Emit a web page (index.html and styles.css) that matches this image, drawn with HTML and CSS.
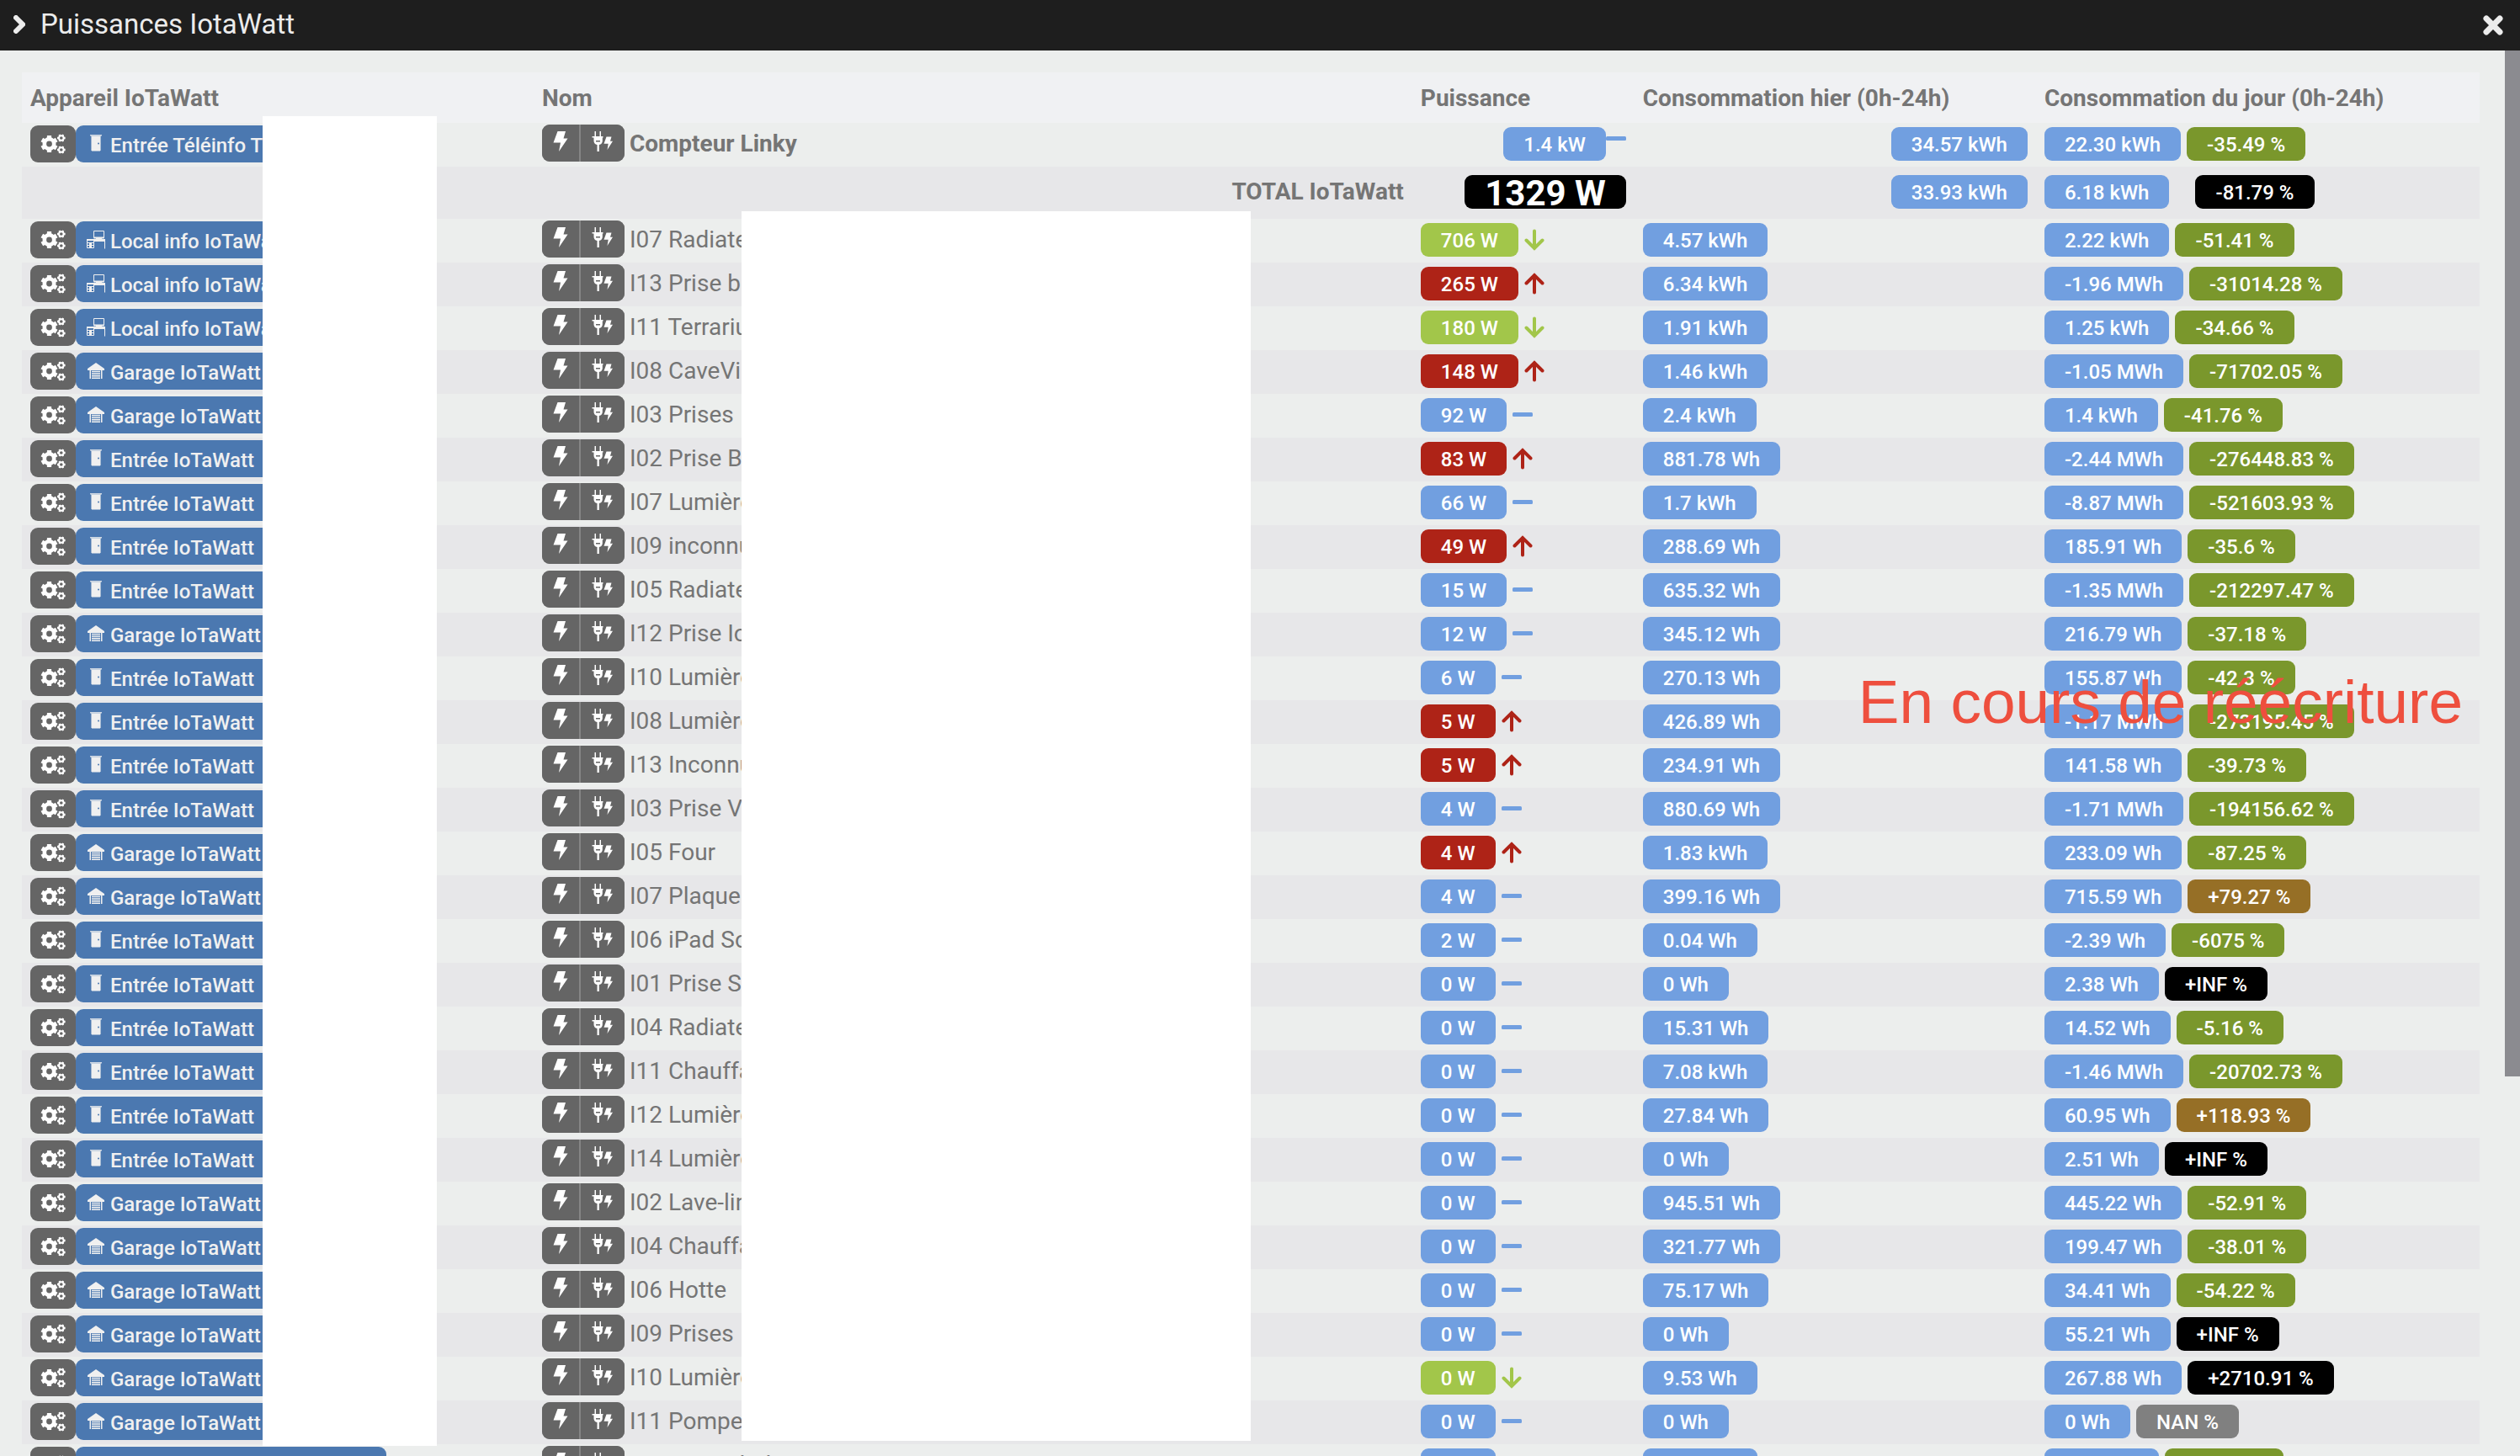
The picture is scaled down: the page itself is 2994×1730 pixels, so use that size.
FILE: index.html
```html
<!DOCTYPE html>
<html lang="fr">
<head>
<meta charset="utf-8">
<title>Puissances IotaWatt</title>
<link rel="stylesheet" href="styles.css">
</head>
<body>
<svg class="sprite" aria-hidden="true">
  <symbol id="cogs" viewBox="0 0 30 24">
    <g fill="none" stroke="currentColor">
      <circle cx="10.5" cy="12" r="5.7" stroke-width="4.6"/>
      <path stroke-width="5.2" stroke-linecap="butt" d="M10.5 2v4.500M10.500 17.500V22M1.840 7l3.900 2.250M15.260 14.750l3.900 2.250M1.840 17l3.900-2.250M15.260 9.250l3.900-2.250"/>
      <circle cx="24.800" cy="5" r="2.800" stroke-width="2"/>
      <path stroke-width="2.400" d="M22.500 1l.9 1.500M27.100 1l-.9 1.500M22.500 9l.9-1.500M27.100 9l-.9-1.500M20 5h1.800M29.600 5h-1.800"/>
      <circle cx="24.800" cy="19" r="2.800" stroke-width="2"/>
      <path stroke-width="2.400" d="M22.500 15l.9 1.500M27.100 15l-.9 1.500M22.500 23l.9-1.500M27.100 23l-.9-1.500M20 19h1.800M29.600 19h-1.800"/>
    </g>
  </symbol>
  <symbol id="door" viewBox="0 0 24 24">
    <path fill="currentColor" opacity=".8" d="M5 1h14v1.500H5z"/>
    <path fill="currentColor" opacity=".55" d="M6 2h12v18H6z"/>
    <path fill="currentColor" d="M7 3h10v17.500H7z"/>
    <circle cx="15" cy="11.500" r="1" fill="#4b78b0"/>
  </symbol>
  <symbol id="desk" viewBox="0 0 24 24">
    <g fill="none" stroke="currentColor" stroke-width="1">
      <path d="M9.500 1.500h12v8h-12zM1.500 12.500h8v9h-8zM1.500 15.500h8M1.500 18.500h8M10 13.500h12M22.500 12v10.500"/>
      <path stroke-width="2" d="M9.500 9.500h12M12 11.500h7M1 12h22M4 17h3M4 20h3"/>
    </g>
  </symbol>
  <symbol id="garage" viewBox="0 0 24 24">
    <path fill="currentColor" d="M12 2L2 9v2h2.500v10H6V11h12v10h1.500V11H22V9z"/>
    <path fill="none" stroke="currentColor" stroke-width="1.600" d="M7 12.500h10M7 15h10M7 17.600h10M7 20.200h10"/>
  </symbol>
  <symbol id="bolt" viewBox="0 0 18 24">
    <path fill="currentColor" d="M5.500 0h9.500l-2.500 8.500H17.500L7 24l2-10.500H.5z"/>
  </symbol>
  <symbol id="plug" viewBox="0 0 26 24">
    <path fill="currentColor" fill-rule="evenodd" d="M3.500 0H5v6h4.500V0H11v6h2.500v1.500H12.800v4c0 2.300-1.500 4-4 4.500v8H6.500v-8c-2.500-.5-4-2.200-4-4.500v-4H.5V6h3zM5 11v1.500h5V11z"/>
    <path fill="currentColor" d="M17.500 6.500h6L22 11.800h3L18.500 22l1.200-7.200H14.500z"/>
  </symbol>
  <symbol id="down" viewBox="0 0 24 26">
    <path fill="none" stroke="currentColor" stroke-width="4" stroke-linecap="round" d="M12 2.500V23M2.500 13.500l9.500 9.500 9.500-9.500"/>
  </symbol>
  <symbol id="up" viewBox="0 0 24 26">
    <path fill="none" stroke="currentColor" stroke-width="4" stroke-linecap="round" d="M12 23.500V3M2.500 12.500L12 3l9.500 9.500"/>
  </symbol>
  <symbol id="flat" viewBox="0 0 24 26">
    <rect y="10" width="24" height="5" rx="1.500" fill="currentColor"/>
  </symbol>
</svg>

<header class="titlebar">
  <h1 class="title">
    <svg class="chevron" viewBox="0 0 14 22" aria-hidden="true"><path d="M3 3l8 8-8 8"/></svg>
    Puissances IotaWatt
  </h1>
  <button class="close" type="button" aria-label="Fermer">
    <svg class="cross" viewBox="0 0 24 24" aria-hidden="true"><path d="M4 4l16 16M20 4L4 20"/></svg>
  </button>
</header>

<main class="viewport">
  <div class="content">
    <table class="power">
      <colgroup><col class="c-device"><col class="c-name"><col class="c-power"><col class="c-yesterday"><col class="c-today"></colgroup>
      <thead>
        <tr><th>Appareil IoTaWatt</th><th>Nom</th><th>Puissance</th><th>Consommation hier (0h-24h)</th><th>Consommation du jour (0h-24h)</th></tr>
      </thead>
      <tbody id="rows"></tbody>
    </table>
    <div class="mask mask-device"></div>
    <div class="mask mask-name"></div>
    <p class="notice">En cours de réécriture</p>
  </div>
  <div class="scrollbar"><div class="thumb"></div></div>
</main>
<script src="rows.js"></script>
</body>
</html>
```
FILE: styles.css
```css
* {
  box-sizing: border-box;
}

body {
  margin: 0;
  height: 100vh;
  display: flex;
  flex-direction: column;
  overflow: hidden;
  background: #eceeed;
  color: #757575;
  font-family: Roboto, "Liberation Sans", sans-serif;
  font-size: 28px;
}

button {
  border: 0;
  padding: 0;
  font: inherit;
  color: inherit;
  background: none;
}

.sprite {
  display: none;
}

/* Title bar */
.titlebar {
  flex: none;
  height: 60px;
  display: flex;
  align-items: center;
  justify-content: space-between;
  padding: 0 20px 0 16px;
  background: #1e1e1e;
  color: #ececec;
}

.title {
  margin: 0;
  display: flex;
  align-items: center;
  gap: 18px;
  padding-bottom: 3px;
  font-size: 33px;
  font-weight: 400;
  line-height: 57px;
}

.chevron,
.cross {
  display: block;
  fill: none;
  stroke: currentColor;
  stroke-width: 6;
  stroke-linecap: round;
}

.chevron {
  width: 14px;
  height: 22px;
}

.cross {
  width: 24px;
  height: 24px;
  stroke-width: 7;
}

/* Scrolling area */
.viewport {
  flex: 1;
  min-height: 0;
  display: flex;
}

.content {
  position: relative;
  flex: 1;
  overflow: hidden;
  padding: 26px 30px 0 26px;
}

.scrollbar {
  width: 18px;
}

.thumb {
  height: 73%;
  background: #8b8b90;
}

/* Table */
.power {
  width: 100%;
  table-layout: fixed;
  border-collapse: collapse;
}

.c-device { width: 20.82%; }
.c-name { width: 35.75%; }
.c-power { width: 9.04%; }
.c-yesterday { width: 16.34%; }
.c-today { width: 18.05%; }

.power th {
  height: 60px;
  padding: 0 10px;
  background: #f0f1f3;
  text-align: left;
  font-weight: 700;
  white-space: nowrap;
}

.power td {
  height: 52px;
  padding: 5px 10px 0;
  vertical-align: top;
  white-space: nowrap;
}

.power tbody tr:nth-child(even) {
  background: #e7e7e9;
}

.power td.device {
  padding-top: 3px;
}

.power td.name {
  padding-top: 2px;
}

.power .total td {
  height: 62px;
  padding-top: 10px;
}

.total .label {
  text-align: right;
  font-weight: 700;
  line-height: 40px;
}

.line {
  display: flex;
  align-items: center;
}

.right {
  justify-content: flex-end;
}

.cog {
  width: 54px;
  height: 44px;
  display: flex;
  align-items: center;
  justify-content: center;
  border-radius: 9px;
  background: #656565;
  color: #fff;
}

.cog svg {
  width: 30px;
  height: 24px;
}

.source {
  width: 369px;
  height: 44px;
  display: flex;
  align-items: center;
  gap: 5px;
  padding-left: 12px;
  border-radius: 9px;
  background: #4b78b0;
  color: #f0f0f0;
  font-size: 24px;
  font-weight: 500;
}

.source svg {
  width: 24px;
  height: 24px;
}

.source span,
.badge {
  padding-top: 3px;
}

.pair {
  display: flex;
  gap: 2px;
  margin-right: 6px;
  overflow: hidden;
  border-radius: 9px;
  background: #858585;
  color: #fff;
}

.pair button {
  width: 44px;
  height: 44px;
  display: flex;
  justify-content: center;
  padding-top: 8px;
  background: #656565;
}

.pair .cmd {
  width: 52px;
}

.pair svg {
  width: 26px;
  height: 24px;
}

.main .title-name {
  font-weight: 700;
}

.badge {
  height: 40px;
  padding-left: 24px;
  padding-right: 24px;
  border-radius: 9px;
  color: #fff;
  font-size: 24px;
  font-weight: 500;
  line-height: 37px;
}

.badge + .badge {
  margin-left: 7px;
}

.total .badge + .badge {
  margin-left: 31px;
}

.badge.big {
  font-size: 42px;
  font-weight: 700;
}

.blue { background: #719fe0; }
.lime { background: #a2c64a; }
.red { background: #ae2317; }
.olive { background: #7a972c; }
.brown { background: #966f26; }
.black { background: #000; }
.grey { background: #808080; }

.trend {
  width: 24px;
  height: 26px;
  margin-left: 7px;
}

.main .trend {
  margin: 0 0 12px;
}

.trend-flat { color: #719fe0; }
.trend-down { color: #a2c64a; }
.trend-up { color: #ae2317; }

/* Blanked-out zones and notice laid over the table */
.mask {
  position: absolute;
  background: #fff;
}

.mask-device {
  top: 78px;
  left: 312px;
  width: 207px;
  height: 1580px;
}

.mask-name {
  top: 191px;
  left: 881px;
  width: 605px;
  height: 1461px;
}

.notice {
  position: absolute;
  top: 734px;
  right: 50px;
  margin: 0;
  color: #ee4f3e;
  font-family: "Liberation Sans", Arial, sans-serif;
  font-size: 73px;
  line-height: 80px;
  white-space: nowrap;
}
```
FILE: rows.js
```js
// device icon, device, name, power, trend, yesterday, today, variation, variation colour
const data = [
  ["desk", "Local info IoTaWatt", "I07 Radiateur", "706 W", "down", "4.57 kWh", "2.22 kWh", "-51.41 %", "olive"],
  ["desk", "Local info IoTaWatt", "I13 Prise bureau", "265 W", "up", "6.34 kWh", "-1.96 MWh", "-31014.28 %", "olive"],
  ["desk", "Local info IoTaWatt", "I11 Terrarium", "180 W", "down", "1.91 kWh", "1.25 kWh", "-34.66 %", "olive"],
  ["garage", "Garage IoTaWatt", "I08 CaveVin", "148 W", "up", "1.46 kWh", "-1.05 MWh", "-71702.05 %", "olive"],
  ["garage", "Garage IoTaWatt", "I03 Prises", "92 W", "flat", "2.4 kWh", "1.4 kWh", "-41.76 %", "olive"],
  ["door", "Entrée IoTaWatt", "I02 Prise Bureau", "83 W", "up", "881.78 Wh", "-2.44 MWh", "-276448.83 %", "olive"],
  ["door", "Entrée IoTaWatt", "I07 Lumières", "66 W", "flat", "1.7 kWh", "-8.87 MWh", "-521603.93 %", "olive"],
  ["door", "Entrée IoTaWatt", "I09 inconnu", "49 W", "up", "288.69 Wh", "185.91 Wh", "-35.6 %", "olive"],
  ["door", "Entrée IoTaWatt", "I05 Radiateur", "15 W", "flat", "635.32 Wh", "-1.35 MWh", "-212297.47 %", "olive"],
  ["garage", "Garage IoTaWatt", "I12 Prise IoTaWatt", "12 W", "flat", "345.12 Wh", "216.79 Wh", "-37.18 %", "olive"],
  ["door", "Entrée IoTaWatt", "I10 Lumières", "6 W", "flat", "270.13 Wh", "155.87 Wh", "-42.3 %", "olive"],
  ["door", "Entrée IoTaWatt", "I08 Lumières", "5 W", "up", "426.89 Wh", "-1.17 MWh", "-273195.45 %", "olive"],
  ["door", "Entrée IoTaWatt", "I13 Inconnu", "5 W", "up", "234.91 Wh", "141.58 Wh", "-39.73 %", "olive"],
  ["door", "Entrée IoTaWatt", "I03 Prise Véranda", "4 W", "flat", "880.69 Wh", "-1.71 MWh", "-194156.62 %", "olive"],
  ["garage", "Garage IoTaWatt", "I05 Four", "4 W", "up", "1.83 kWh", "233.09 Wh", "-87.25 %", "olive"],
  ["garage", "Garage IoTaWatt", "I07 Plaque", "4 W", "flat", "399.16 Wh", "715.59 Wh", "+79.27 %", "brown"],
  ["door", "Entrée IoTaWatt", "I06 iPad Sol", "2 W", "flat", "0.04 Wh", "-2.39 Wh", "-6075 %", "olive"],
  ["door", "Entrée IoTaWatt", "I01 Prise Salon", "0 W", "flat", "0 Wh", "2.38 Wh", "+INF %", "black"],
  ["door", "Entrée IoTaWatt", "I04 Radiateur", "0 W", "flat", "15.31 Wh", "14.52 Wh", "-5.16 %", "olive"],
  ["door", "Entrée IoTaWatt", "I11 Chauffage", "0 W", "flat", "7.08 kWh", "-1.46 MWh", "-20702.73 %", "olive"],
  ["door", "Entrée IoTaWatt", "I12 Lumières", "0 W", "flat", "27.84 Wh", "60.95 Wh", "+118.93 %", "brown"],
  ["door", "Entrée IoTaWatt", "I14 Lumières", "0 W", "flat", "0 Wh", "2.51 Wh", "+INF %", "black"],
  ["garage", "Garage IoTaWatt", "I02 Lave-linge", "0 W", "flat", "945.51 Wh", "445.22 Wh", "-52.91 %", "olive"],
  ["garage", "Garage IoTaWatt", "I04 Chauffage", "0 W", "flat", "321.77 Wh", "199.47 Wh", "-38.01 %", "olive"],
  ["garage", "Garage IoTaWatt", "I06 Hotte", "0 W", "flat", "75.17 Wh", "34.41 Wh", "-54.22 %", "olive"],
  ["garage", "Garage IoTaWatt", "I09 Prises", "0 W", "flat", "0 Wh", "55.21 Wh", "+INF %", "black"],
  ["garage", "Garage IoTaWatt", "I10 Lumières", "0 W", "down", "9.53 Wh", "267.88 Wh", "+2710.91 %", "black"],
  ["garage", "Garage IoTaWatt", "I11 Pompe", "0 W", "flat", "0 Wh", "0 Wh", "NAN %", "grey"],
  ["garage", "Garage IoTaWatt", "I01 Prise chaîne", "0 W", "flat", "0.04 Wh", "0.02 Wh", "-57.53 %", "olive"]
];

const icon = (id, cls = "") => `<svg class="${cls}" aria-hidden="true"><use href="#${id}"/></svg>`;
const badge = (text, color) => `<span class="badge ${color}">${text}</span>`;
const powerColor = { down: "lime", up: "red", flat: "blue" };

const deviceCell = (ic, label) => `<td class="device"><div class="line">
  <button class="cog" type="button" aria-label="Configurer">${icon("cogs")}</button>
  <button class="source" type="button">${icon(ic)}<span>${label}</span></button></div></td>`;

const nameCell = (name) => `<td class="name"><div class="line"><div class="pair">
  <button type="button" aria-label="Puissance">${icon("bolt")}</button>
  <button class="cmd" type="button" aria-label="Consommation">${icon("plug")}</button>
  </div><span class="title-name">${name}</span></div></td>`;

const row = ([ic, device, name, power, trend, yesterday, today, delta, color], main) => {
  const side = main ? "line right" : "line";
  return `<tr class="${main ? "main" : ""}">${deviceCell(ic, device)}${nameCell(name)}
  <td><div class="${side}">${badge(power, powerColor[trend])}${icon(trend, "trend trend-" + trend)}</div></td>
  <td><div class="${side}">${badge(yesterday, "blue")}</div></td>
  <td><div class="line">${badge(today, "blue")}${badge(delta, color)}</div></td></tr>`;
};

const linky = ["door", "Entrée Téléinfo TIC", "Compteur Linky", "1.4 kW", "flat", "34.57 kWh", "22.30 kWh", "-35.49 %", "olive"];
const total = `<tr class="total"><td></td><td class="label">TOTAL IoTaWatt</td>
  <td><div class="line right">${badge("1329 W", "black big")}</div></td>
  <td><div class="line right">${badge("33.93 kWh", "blue")}</div></td>
  <td><div class="line">${badge("6.18 kWh", "blue")}${badge("-81.79 %", "black")}</div></td></tr>`;

document.getElementById("rows").innerHTML =
  row(linky, true) + total + data.map((d) => row(d, false)).join("");
```
